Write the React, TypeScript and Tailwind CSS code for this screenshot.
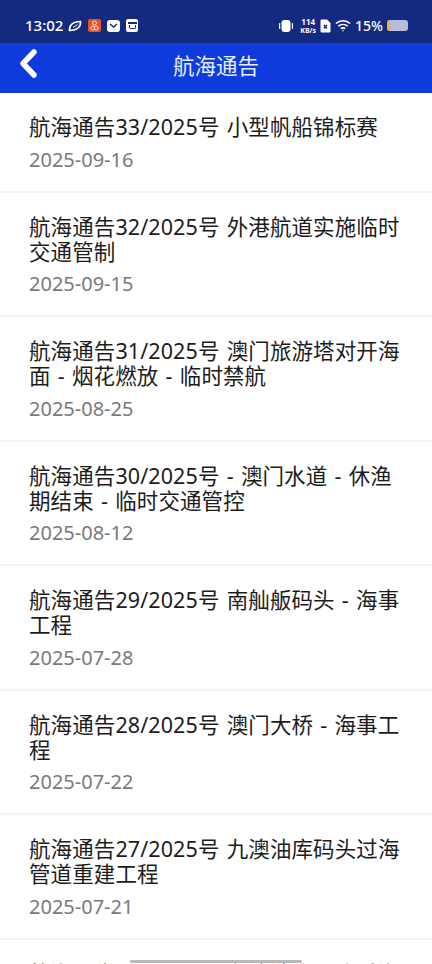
const items = [
  ["航海通告33/2025号 小型帆船锦标赛", "2025-09-16"],
  ["航海通告32/2025号 外港航道实施临时交通管制", "2025-09-15"],
  ["航海通告31/2025号 澳门旅游塔对开海面 - 烟花燃放 - 临时禁航", "2025-08-25"],
  ["航海通告30/2025号 - 澳门水道 - 休渔期结束 - 临时交通管控", "2025-08-12"],
  ["航海通告29/2025号 南舢舨码头 - 海事工程", "2025-07-28"],
  ["航海通告28/2025号 澳门大桥 - 海事工程", "2025-07-22"],
  ["航海通告27/2025号 九澳油库码头过海管道重建工程", "2025-07-21"],
  ["航海通告26/2025号 九澳油库码头过海管道工程", "2025-07-20"],
];

export default function App() {
  return (
    <div className="relative h-[964px] w-[432px] overflow-hidden bg-white font-['Noto_Sans','Noto_Sans_CJK_SC',sans-serif]">
      <div className="flex h-[43px] items-center justify-between bg-[#142a80] pl-[25px] pr-[24px] pt-[8px] text-white">
        <div className="flex items-center">
          <span className="text-[15px] font-medium leading-none">13:02</span>
          <svg width="14" height="12" viewBox="0 0 14 12" className="ml-[5px]" fill="none" stroke="white" strokeWidth="1.6"><path d="M1.5 10.5C1 6 4 1.5 12.5 1.5C13 6 10 10.5 1.5 10.5Z" /><path d="M5 7.5 9.5 4.5" strokeWidth="1" /></svg>
          <span className="ml-[6px] flex h-[13px] w-[13px] items-center justify-center rounded-[2px] bg-[#e2552b]">
            <svg width="9" height="11" viewBox="0 0 9 11" fill="none" stroke="#ffd9c8" strokeWidth="1"><circle cx="4.5" cy="3" r="2" /><circle cx="2.8" cy="8" r="2" /><circle cx="6.2" cy="8" r="2" /></svg>
          </span>
          <span className="ml-[6px] flex h-[12px] w-[13px] items-center justify-center rounded-[3px] bg-white">
            <svg width="9" height="5" viewBox="0 0 9 5" fill="none" stroke="#142a80" strokeWidth="1.4"><path d="M1 1 4.5 4 8 1" /></svg>
          </span>
          <span className="ml-[6px] flex h-[13px] w-[12px] flex-col items-center justify-center gap-[1px] rounded-[2px] bg-white">
            <span className="h-[2px] w-[9px] bg-[#142a80]" />
            <span className="h-[4px] w-[7px] rounded-b-[2px] border border-t-0 border-[#142a80]" />
          </span>
        </div>
        <div className="flex items-center">
          <svg width="16" height="14" viewBox="0 0 16 14" fill="white"><rect x="3.5" y="1" width="9" height="12" rx="3" /><rect x="1" y="4" width="1.2" height="6" rx=".6" /><rect x="13.8" y="4" width="1.2" height="6" rx=".6" /></svg>
          <div className="ml-[6px] flex flex-col items-center font-bold">
            <span className="text-[8px] leading-[9px]">114</span>
            <span className="text-[7px] leading-[9px]">KB/s</span>
          </div>
          <svg width="11" height="14" viewBox="0 0 11 14" className="ml-[4px]"><path d="M1.5 0.5H7L10.5 4V12A1.5 1.5 0 0 1 9 13.5H2A1.5 1.5 0 0 1 .5 12V2A1.5 1.5 0 0 1 1.5 .5Z" fill="white" /><path d="M3.8 6 7 9.5M7 6 3.8 9.5" stroke="#142a80" strokeWidth="1.3" /></svg>
          <svg width="16" height="13" viewBox="0 0 16 13" fill="none" stroke="white" strokeWidth="1.6" className="ml-[4px]"><path d="M.8 4.5C5 .8 11 .8 15.2 4.5" /><path d="M3.3 7.2C6 5 10 5 12.7 7.2" /><path d="M5.8 9.7C7 8.8 9 8.8 10.2 9.7" /><circle cx="8" cy="11.8" r=".7" fill="white" stroke="none" /></svg>
          <span className="ml-[4px] text-[14px] font-medium leading-none">15%</span>
          <div className="ml-[4px] h-[11px] w-[21px] overflow-hidden rounded-[3px] bg-[#b8bcdc]">
            <div className="h-full w-[3px] bg-[#f0b429]" />
          </div>
        </div>
      </div>
      <div className="relative flex h-[50px] items-center justify-center bg-[#0f3bdd] pb-[5px]">
        <svg width="20" height="32" viewBox="0 0 20 32" fill="none" stroke="white" strokeWidth="5.5" strokeLinecap="round" strokeLinejoin="round" className="absolute left-[19px] top-[5px]"><path d="M15 4 4 15.5 15 27" /></svg>
        <span className="text-[21.5px] leading-none text-[#e8edff]">航海通告</span>
      </div>
      <div>
        {items.map(([title, date]) => (
          <div key={date} className="border-b-2 border-[#f4f4f4] pb-[19px] pl-[29px] pr-[26px] pt-[21px]">
            <div className="text-[21.5px] leading-[25px] tracking-[0.1px] text-[#1c1c1c] [word-spacing:1.5px]">{title}</div>
            <div className="mt-[7.5px] text-[20px] leading-[25px] text-[#7a7a7a]">{date}</div>
          </div>
        ))}
      </div>
      <div className="absolute bottom-[1px] left-[130px] h-[3px] w-[172px] rounded-full bg-[#b8b8b8]" />
    </div>
  );
}
